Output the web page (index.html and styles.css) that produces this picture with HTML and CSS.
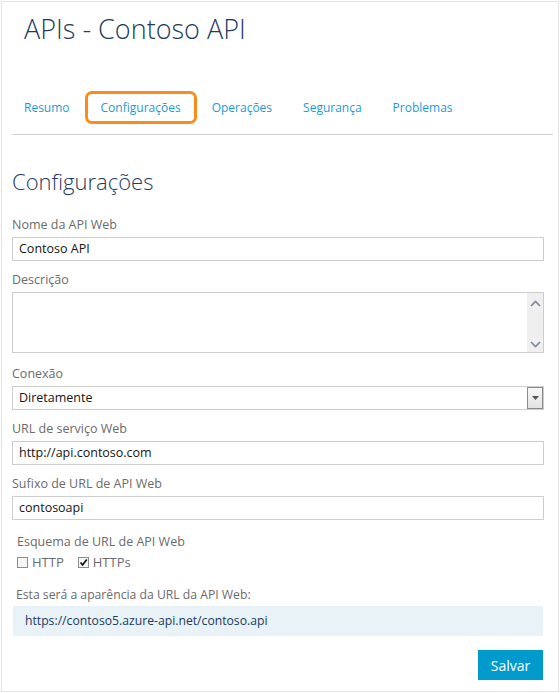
FILE: index.html
```html
<!DOCTYPE html>
<html lang="pt-BR">
<head>
<meta charset="utf-8">
<title>APIs - Contoso API</title>
<link rel="stylesheet" href="styles.css">
</head>
<body>
<div class="frame">
  <header class="top">
    <h1 class="title">APIs - Contoso API</h1>
    <nav class="tabs">
      <a class="tab">Resumo</a>
      <a class="tab active">Configurações</a>
      <a class="tab">Operações</a>
      <a class="tab">Segurança</a>
      <a class="tab">Problemas</a>
    </nav>
    <div class="rule"></div>
  </header>
  <main class="form">
    <h2 class="section-title">Configurações</h2>

    <div class="field">
      <div class="label">Nome da API Web</div>
      <div class="input">Contoso API</div>
    </div>

    <div class="field field-area">
      <div class="label">Descrição</div>
      <div class="textarea">
        <div class="textarea-body"></div>
        <div class="scrollbar">
          <svg class="chev" width="11" height="7" viewBox="0 0 11 7"><path d="M1 6 L5.5 1.5 L10 6" fill="none" stroke="#7d8699" stroke-width="1.6"/></svg>
          <svg class="chev" width="11" height="7" viewBox="0 0 11 7"><path d="M1 1 L5.5 5.5 L10 1" fill="none" stroke="#7d8699" stroke-width="1.6"/></svg>
        </div>
      </div>
    </div>

    <div class="field">
      <div class="label">Conexão</div>
      <div class="input select">
        <span class="select-text">Diretamente</span>
        <span class="select-btn"><svg width="7" height="4" viewBox="0 0 7 4"><path d="M0 0 H7 L3.5 4 Z" fill="#555"/></svg></span>
      </div>
    </div>

    <div class="field">
      <div class="label">URL de serviço Web</div>
      <div class="input">http://api.contoso.com</div>
    </div>

    <div class="field">
      <div class="label">Sufixo de URL de API Web</div>
      <div class="input">contosoapi</div>
    </div>

    <div class="scheme">
      <div class="label">Esquema de URL de API Web</div>
      <div class="checks">
        <label class="check"><span class="box"></span>HTTP</label>
        <label class="check"><span class="box"><svg width="9" height="9" viewBox="0 0 9 9"><path d="M1.5 4.5 L3.6 7 L7.8 1.5" fill="none" stroke="#111" stroke-width="1.7"/></svg></span>HTTPs</label>
      </div>
    </div>

    <div class="preview-label">Esta será a aparência da URL da API Web:</div>
    <div class="preview">https://contoso5.azure-api.net/contoso.api</div>

    <div class="actions">
      <button class="btn">Salvar</button>
    </div>
  </main>
</div>
</body>
</html>
```
FILE: styles.css
```css
* { box-sizing: border-box; }
html, body { margin: 0; padding: 0; background: #fff; }
body { font-family: "Open Sans", "Noto Sans", sans-serif; }

.frame {
  margin: 1px 0 0 1px;
  width: 558px;
  height: 691px;
  border: 1px solid #e4e4e4;
  background: #fff;
}

.top { padding-top: 9px; }

.title {
  margin: 0 0 0 22px;
  font-size: 27px;
  font-weight: 300;
  line-height: 36px;
  color: #1f3c60;
}

.tabs {
  display: flex;
  margin: 44px 0 0 6px;
}

.tab {
  display: flex;
  align-items: center;
  height: 33px;
  padding: 0 13px;
  border: 3px solid transparent;
  border-radius: 7px;
  font-size: 12px;
  color: #1b9bd6;
  cursor: pointer;
}
.tab + .tab { margin-left: -1px; }

.tab.active { border-color: #fb8c1a; }

.rule {
  height: 1px;
  margin: 10px 5px 0 10px;
  background: #cfcfcf;
}

.form { padding: 0 14px 0 10px; }

.section-title {
  margin: 31px 0 0;
  font-size: 22px;
  font-weight: 300;
  line-height: 30px;
  color: #1f3c60;
}

.label {
  font-size: 12.5px;
  line-height: 17px;
  color: #6b6b6b;
}

.field { margin-top: 10px; }
.section-title + .field { margin-top: 20px; }
.field .label { margin-bottom: 4px; }

.input {
  height: 24px;
  padding: 0 6px;
  border: 1px solid #cdcdcd;
  font-size: 12.5px;
  line-height: 22px;
  color: #151515;
}

.textarea {
  display: flex;
  height: 61px;
  margin-top: 1px;
  border: 1px solid #cdcdcd;
}
.textarea-body { flex: 1; }
.scrollbar {
  width: 16px;
  background: #efefef;
  display: flex;
  flex-direction: column;
  align-items: center;
  justify-content: space-between;
  padding: 7px 0 4px;
}
.chev { display: block; }

.field-area + .field { margin-top: 12px; }

.select {
  display: flex;
  justify-content: space-between;
  padding-right: 0;
}
.select-btn {
  width: 16px;
  height: 22px;
  border: 1px solid #8a8a8a;
  background: linear-gradient(#f7f7f7, #e3e3e3);
  display: flex;
  align-items: center;
  justify-content: center;
}
.select-btn svg { display: block; }

.scheme { margin-top: 13px; padding-left: 5px; }
.scheme .label { margin-bottom: 4px; }

.checks {
  display: flex;
  gap: 14px;
  font-size: 13px;
  line-height: 16px;
  color: #6b6b6b;
}
.check { display: flex; align-items: center; gap: 4px; }
.box {
  width: 11px;
  height: 11px;
  border: 1px solid #8c8c8c;
  background: #f6f6f6;
  display: flex;
  align-items: center;
  justify-content: center;
}
.box svg { display: block; }

.preview-label {
  margin-top: 17px;
  padding-left: 4px;
  font-size: 12.2px;
  line-height: 16px;
  color: #6b6b6b;
}

.preview {
  margin: 3px 1px 0;
  height: 30px;
  padding: 0 12px;
  background: #e9f2f6;
  font-size: 12.2px;
  line-height: 30px;
  color: #1b3a5e;
}

.actions {
  display: flex;
  justify-content: flex-end;
  margin: 14px 1px 0 0;
}

.btn {
  width: 65px;
  height: 30px;
  border: 0;
  background: #009bcc;
  color: #fff;
  font-family: inherit;
  font-size: 14px;
  padding: 0;
}
```
